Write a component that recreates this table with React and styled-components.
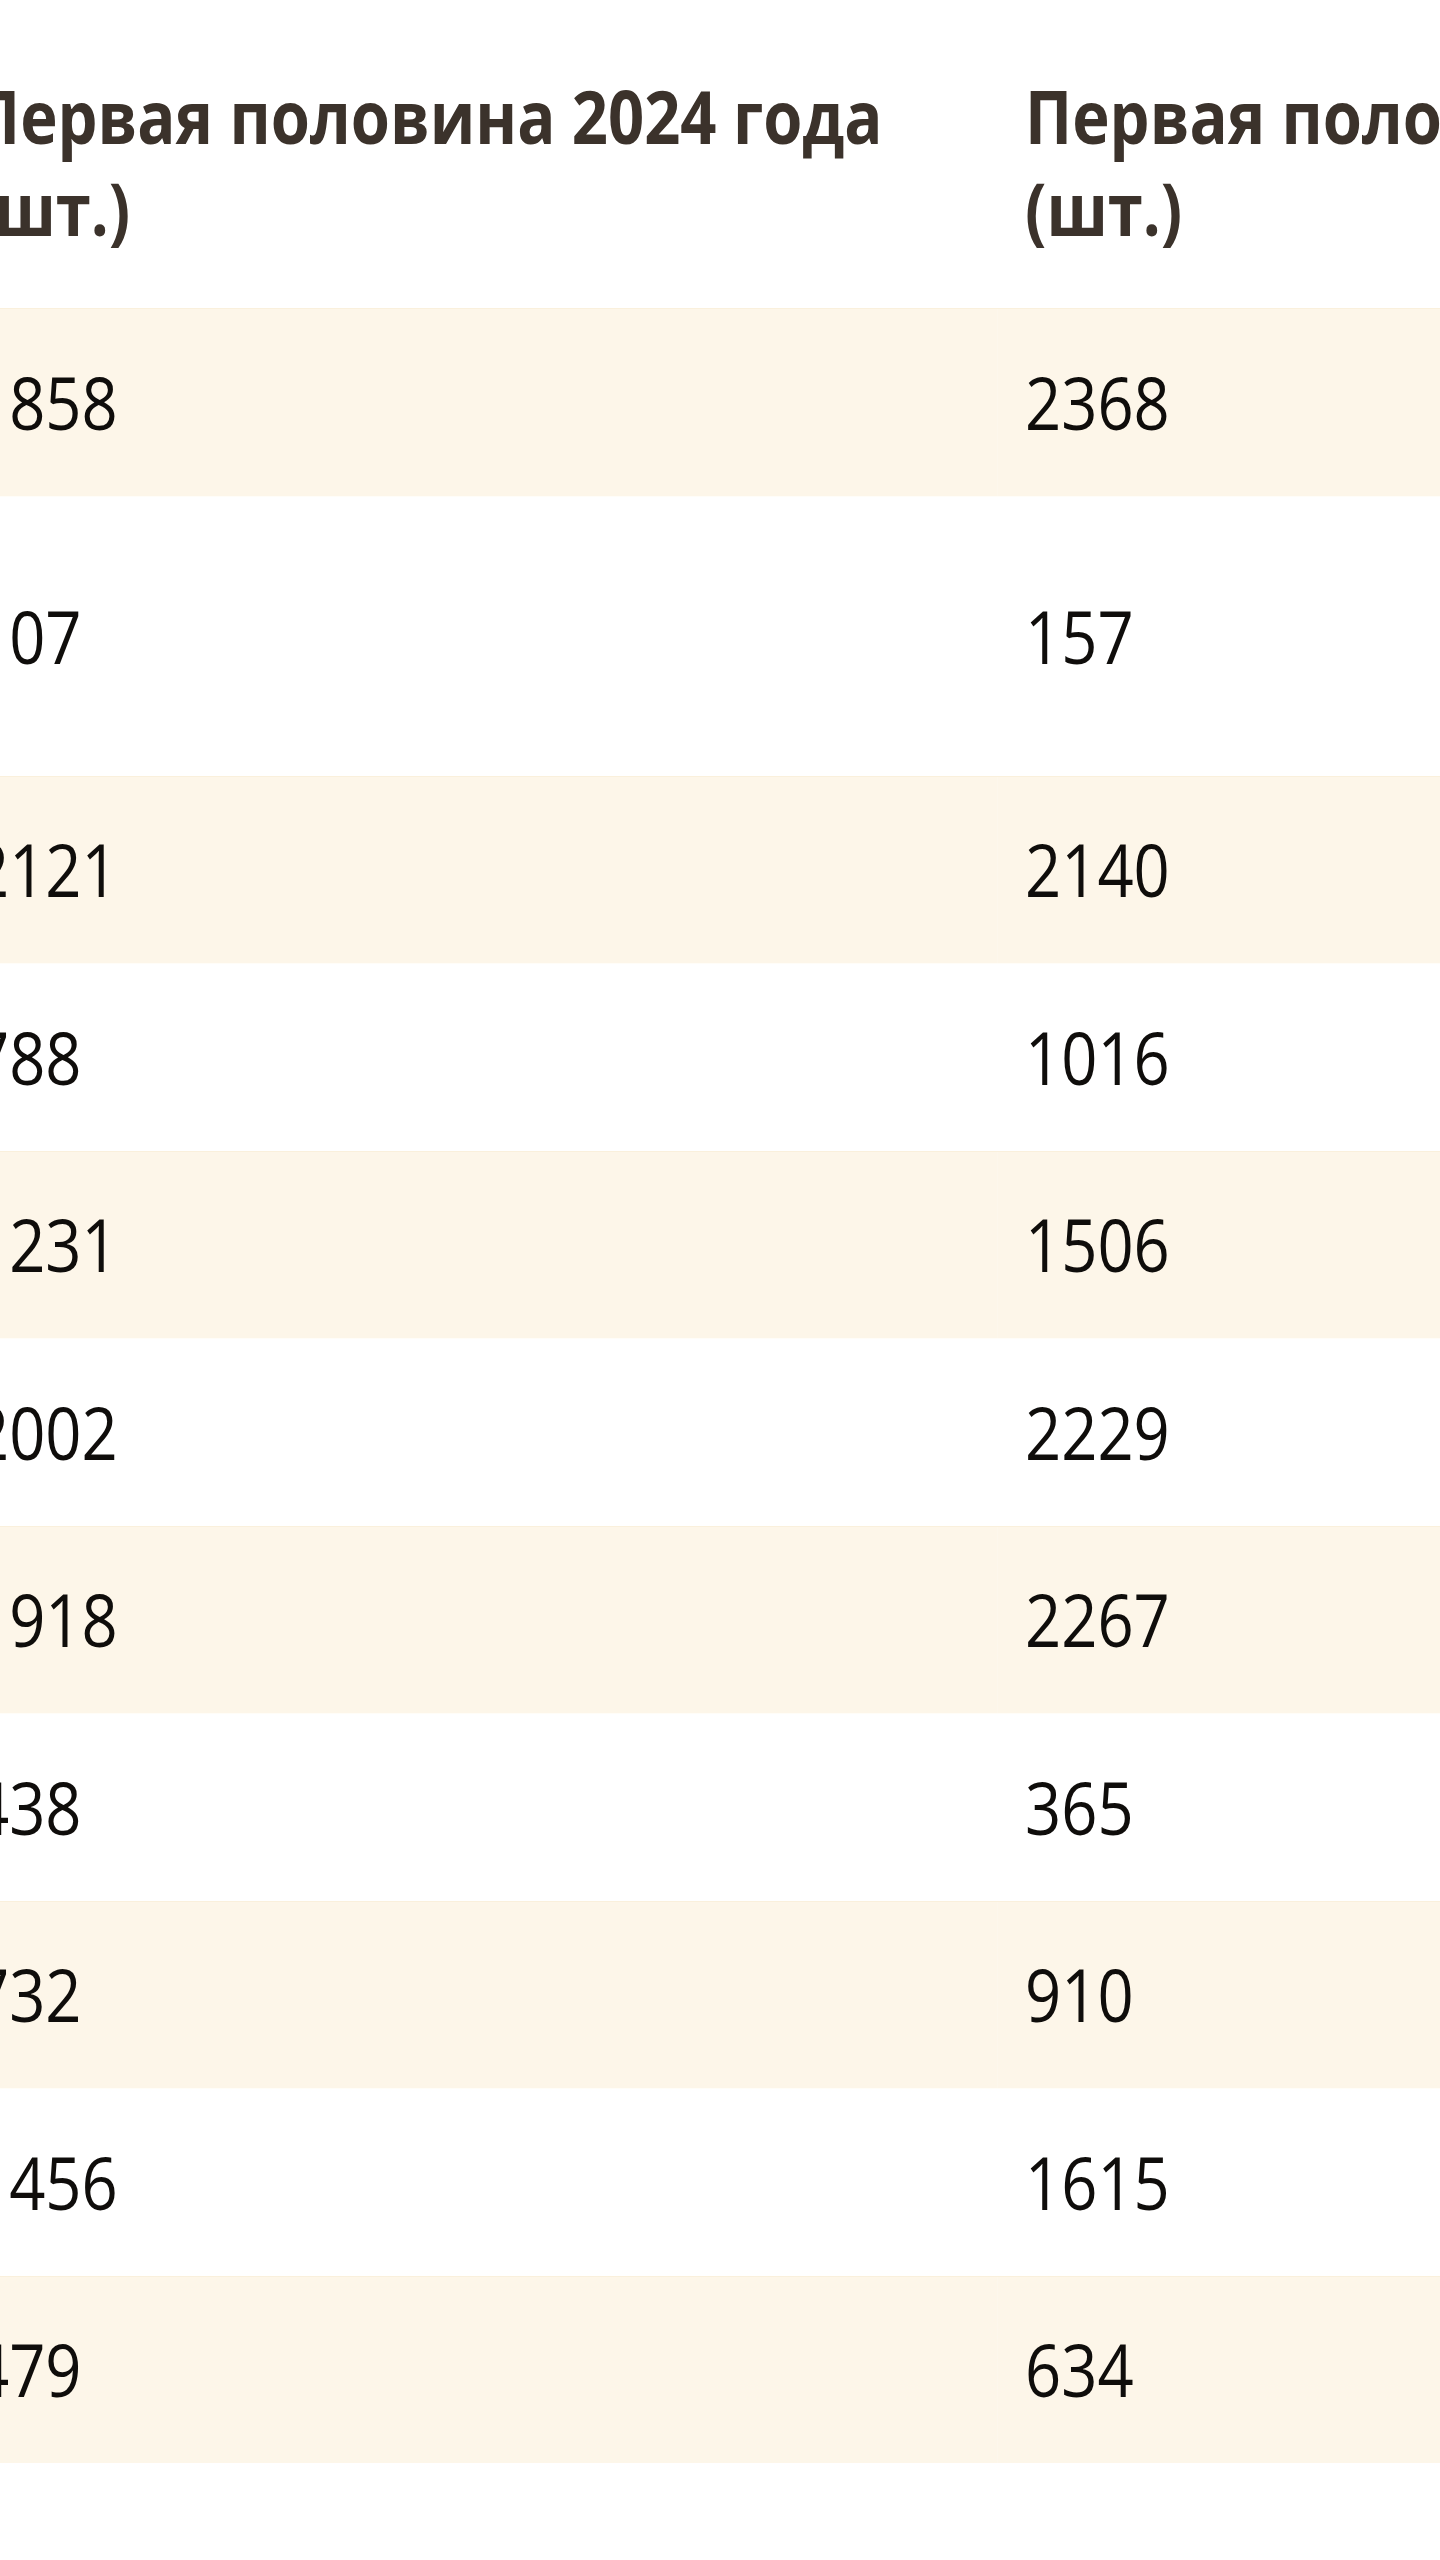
import styled, { createGlobalStyle } from "styled-components";

const GlobalStyle = createGlobalStyle`
  html, body {
    margin: 0;
    padding: 0;
    background: #ffffff;
    overflow: hidden;
  }
  body {
    font-family: "Open Sans", "Noto Sans", "DejaVu Sans", sans-serif;
  }
`;

const rows = [
  { a: "1858", b: "2368" },
  { a: "107", b: "157", tall: true },
  { a: "2121", b: "2140" },
  { a: "788", b: "1016" },
  { a: "1231", b: "1506" },
  { a: "2002", b: "2229" },
  { a: "1918", b: "2267" },
  { a: "438", b: "365" },
  { a: "732", b: "910" },
  { a: "1456", b: "1615" },
  { a: "479", b: "634" },
];

const App = () => {
  return (
    <>
      <GlobalStyle />
      <Wrapper>
        <Table>
          <colgroup>
            <col />
            <col />
          </colgroup>
          <thead>
            <tr>
              <HeadCell>Первая половина 2024 года (шт.)</HeadCell>
              <HeadCell>Первая половина 2025 года (шт.)</HeadCell>
            </tr>
          </thead>
          <tbody>
            {rows.map((row, index) => (
              <Row key={index} $shaded={index % 2 === 0} $tall={row.tall}>
                <Cell>{row.a}</Cell>
                <Cell>{row.b}</Cell>
              </Row>
            ))}
          </tbody>
        </Table>
      </Wrapper>
    </>
  );
};

/* the screenshot is squeezed sideways, so the whole table is too */
const Wrapper = styled.section`
  width: 1440px;
  transform: scaleX(0.855);
  transform-origin: 0 0;
`;

const Table = styled.table`
  margin-left: -63.6px;
  width: 2461px;
  table-layout: fixed;
  border-collapse: collapse;

  col {
    width: 1230.4px;
  }
`;

const HeadCell = styled.th`
  padding: 70px 100px 54px 32px;
  text-align: left;
  vertical-align: top;
  font-size: 74px;
  line-height: 92px;
  font-weight: 700;
  color: #3b322b;
`;

const Row = styled.tr`
  height: ${({ $tall }) => ($tall ? "280px" : "187.5px")};
  background: ${({ $shaded }) => ($shaded ? "#fdf6e9" : "#ffffff")};
  box-shadow: inset 0 1px 0 ${({ $shaded }) => ($shaded ? "#faf0dc" : "#fffdf8")};
`;

const Cell = styled.td`
  padding: 0 32px;
  vertical-align: middle;
  font-size: 74px;
  line-height: 92px;
  font-weight: 500;
  color: #0f0d0b;
`;

export default App;
